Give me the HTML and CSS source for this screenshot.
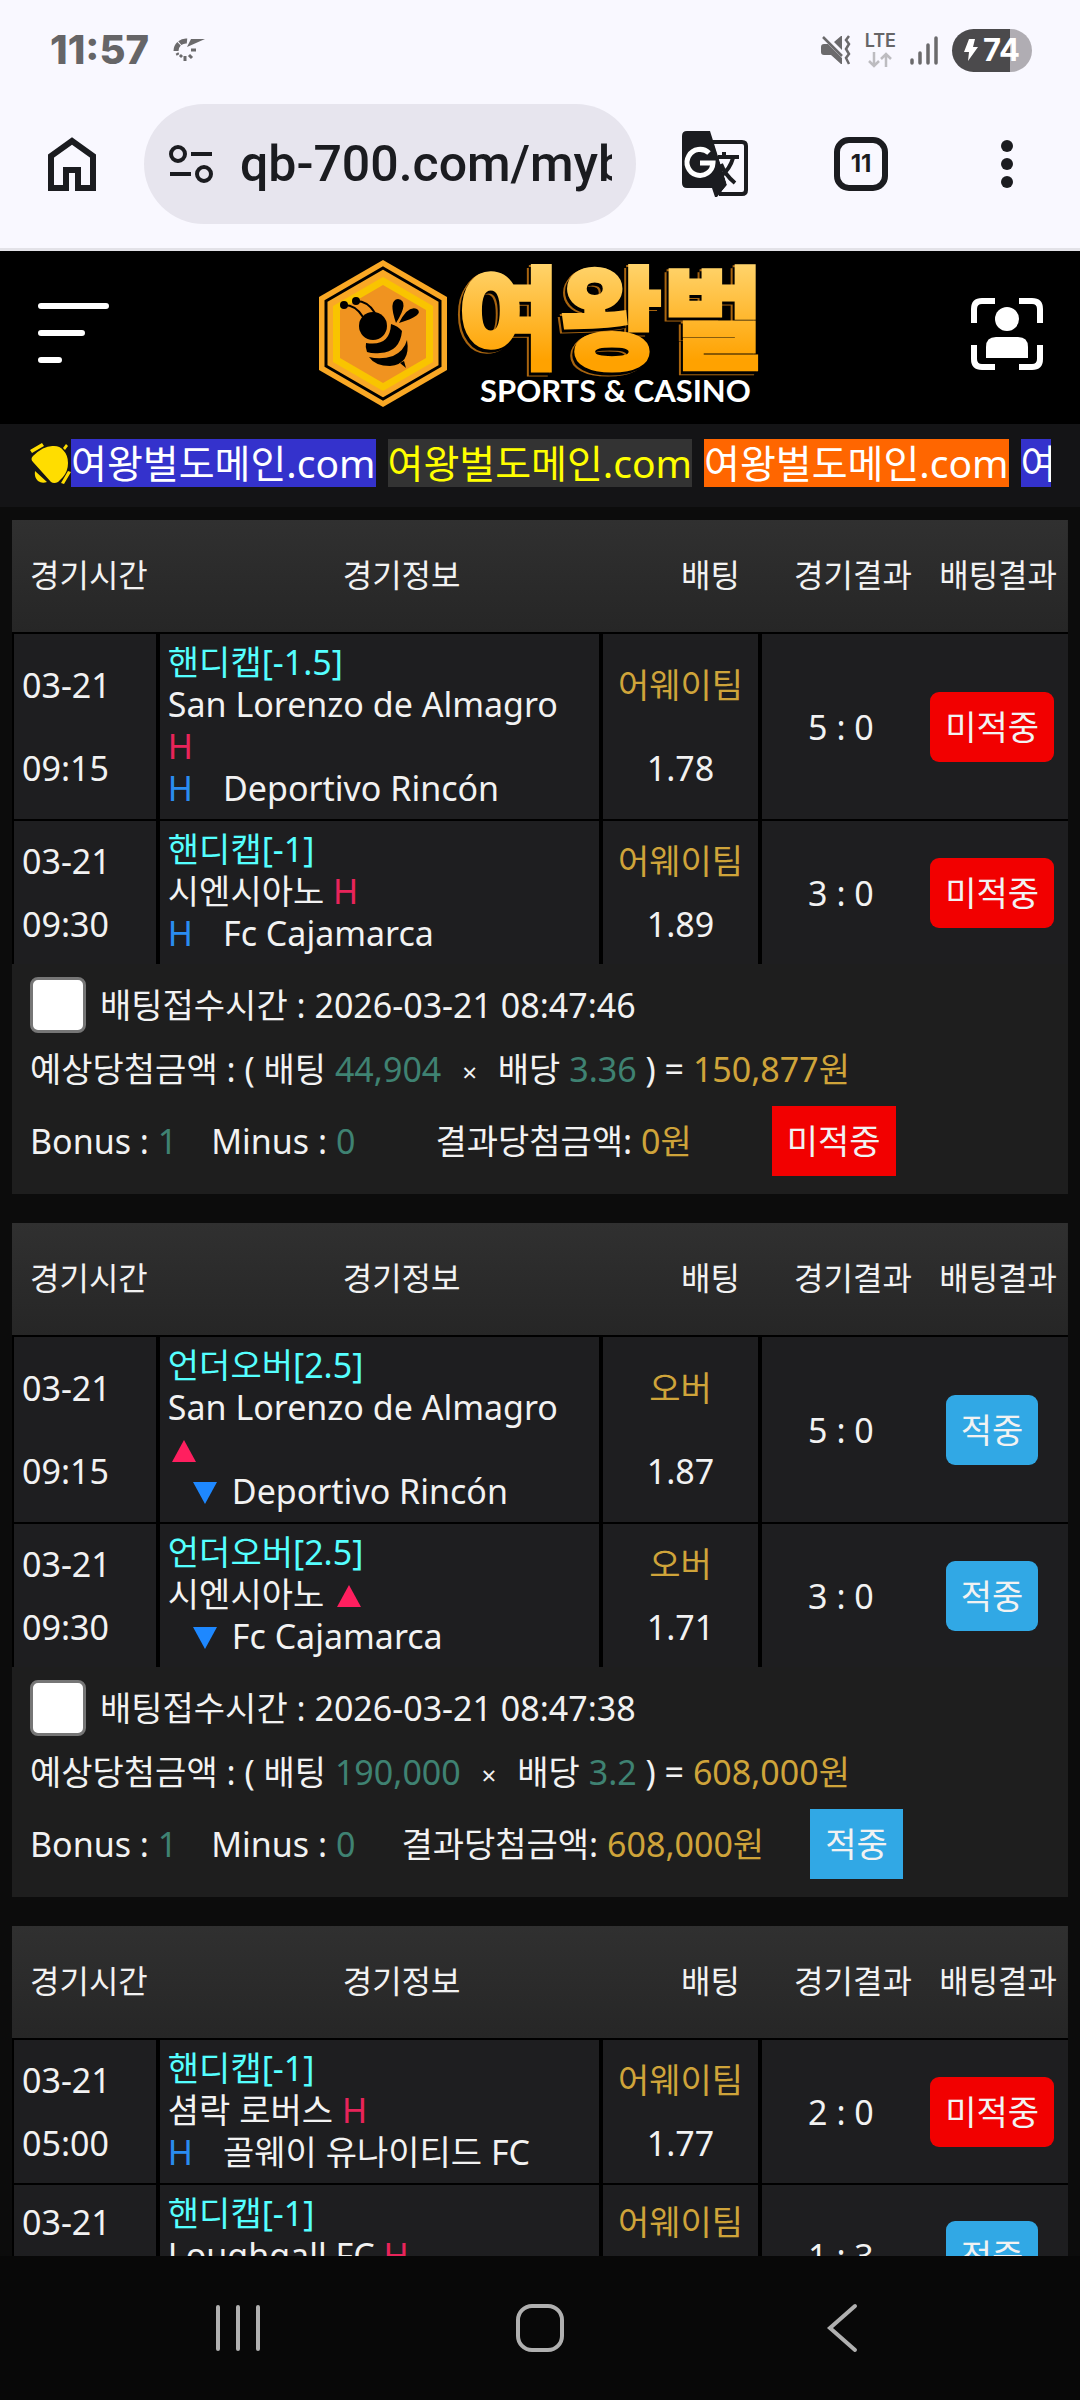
FILE: index.html
```html
<!DOCTYPE html>
<html lang="ko">
<head>
    <meta charset="UTF-8">
    <meta name="viewport" content="width=device-width, initial-scale=1.0">
    <title>여왕벌 - 배팅내역</title>
    <link rel="stylesheet" href="styles.css">
</head>
<body>
    <!-- 상태바 -->
    <div class="status-bar">
        <div class="status-left">
            <span class="clock">11:57</span>
            <svg width="32" height="24" viewBox="0 0 32 24" fill="none" stroke="#6b6a6c">
                <path d="M3 13a10 10 0 0 1 11-10" stroke-width="5" stroke-dasharray="8 1"/>
                <path d="M4 15l1 2M7 19l2-2M12 23v-5M19 20l-3-3M23 12h-5" stroke-width="3"/>
                <path d="M18 1h14L14 9z" fill="#6b6a6c" stroke="none"/>
            </svg>
        </div>
        <div class="status-right">
            <svg width="30" height="30" viewBox="0 0 30 30">
                <path d="M0 12q0-3 3-3h4l14 14v6h-1L10 20H3q-3 0-3-3zM13 7l7-6h1v14z" fill="#6b6a6c"/>
                <path d="M2 2l19 19" stroke="#6b6a6c" stroke-width="2.500"/>
                <path d="M28 1l-3 4 3 4-3 5 3 5-3 4 3 6" fill="none" stroke="#6b6a6c" stroke-width="2.500"/>
            </svg>
            <div class="lte">
                <span>LTE</span>
                <svg width="24" height="16" viewBox="0 0 24 16" fill="none" stroke="#bdbcc0" stroke-width="2.500"><path d="M6 0v14M1 9l5 5 5-5M18 15V2M13 7l5-5 5 5"/></svg>
            </div>
            <svg width="28" height="30" viewBox="0 0 28 30" stroke="#6b6a6c" stroke-width="3.500" stroke-linecap="round"><path d="M2 25v3M10 18v10M18 10v18M26 3v25"/></svg>
            <div class="battery">
                <svg width="14" height="22" viewBox="0 0 14 22"><path d="M5 0h6L9 8h5L4 22l1-9H0z" fill="#fff"/></svg>
                <span>74</span>
            </div>
        </div>
    </div>

    <!-- 브라우저 주소창 -->
    <div class="toolbar">
        <button class="tool home" aria-label="홈">
            <svg width="48" height="54" viewBox="0 0 48 54"><path d="M3 51V19L24 4l21 15v32H30V33H18v18z" fill="none" stroke="#1b1c20" stroke-width="6"/></svg>
        </button>
        <label class="address">
            <svg width="46" height="40" viewBox="0 0 46 40" fill="none" stroke="#1b1c20" stroke-width="4"><circle cx="10" cy="10" r="7"/><circle cx="36" cy="30" r="7"/><path d="M23 10h21M2 30h21"/></svg>
            <input type="text" value="qb-700.com/myb" aria-label="주소">
        </label>
        <button class="tool" aria-label="번역">
            <svg width="66" height="66" viewBox="0 0 66 66">
                <path d="M30 11h30q4 0 4 4v44q0 4-4 4H37" fill="none" stroke="#1b1c20" stroke-width="4"/>
                <path d="M5 0h23l17 54-10 12h-2l-3-9H5q-5 0-5-5V5q0-5 5-5z" fill="#1b1c20"/>
                <path d="M33 14h27v46H40l5-6z" fill="#f9f8ff"/>
                <path d="M27 22a13 13 0 1 0 4 10H18" fill="none" stroke="#fff" stroke-width="5"/>
                <path d="M36 26h21M42 21v5M51 27q-3 11-12 18M39 33q4 11 14 19" fill="none" stroke="#1b1c20" stroke-width="4"/>
            </svg>
        </button>
        <button class="tool" aria-label="탭"><span class="tab-count">11</span></button>
        <button class="tool" aria-label="메뉴">
            <svg width="12" height="48" viewBox="0 0 12 48" fill="#1b1c20"><circle cx="6" cy="6" r="6"/><circle cx="6" cy="24" r="6"/><circle cx="6" cy="42" r="6"/></svg>
        </button>
    </div>

    <main>
        <header class="header">
            <button class="icon-btn" aria-label="전체메뉴">
                <svg width="72" height="66" viewBox="0 0 72 66" stroke="#fff" stroke-width="6" stroke-linecap="round"><path d="M4 5h65M4 32h41M4 59h18"/></svg>
            </button>
            <a href="#" class="logo">
                <svg width="442" height="150" viewBox="0 0 442 150">
                    <defs>
                        <linearGradient id="gold" x1="0" y1="0" x2="0" y2="1">
                            <stop offset="0.15" stop-color="#ffd875"/>
                            <stop offset="0.8" stop-color="#ffa200"/>
                        </linearGradient>
                    </defs>
                    <path d="M64 1l64 37v73l-64 37L0 111V38z" fill="#f9a825"/>
                    <path d="M64 9l57 33v65l-57 33L7 107V42z" fill="none" stroke="#000" stroke-width="3"/>
                    <path d="M64 18l50 29v56l-50 29-50-29V47z" fill="#f9c400"/>
                    <path d="M64 26l43 25v48l-43 25-43-25V51z" fill="#f09320"/>
                    <g fill="#000">
                        <circle cx="54" cy="67" r="14"/>
                        <circle cx="25" cy="46" r="4"/>
                        <circle cx="37" cy="42" r="4"/>
                        <path d="M25 46q12 0 19 12M37 42q12 0 19 12" fill="none" stroke="#000" stroke-width="2"/>
                        <path d="M77 64q-8-23 2-24 12 2-2 24zM80 64q9-18 18-14 8 6-18 14z"/>
                        <path d="M72 65q7 2 11 7-2 21-22 22-7 1-13-1-2-5-1-9 24 4 25-19z"/>
                        <path d="M88 81q4 24-17 26-15 0-21-9 12 3 24-1 11-5 14-16z"/>
                        <path d="M81 104l4-2 2 7z"/>
                    </g>
                    <text class="logo-name" x="139" y="101" fill="url(#gold)" stroke="url(#gold)">여왕벌</text>
                    <text class="logo-sub" x="161" y="143" fill="#fff">SPORTS &amp; CASINO</text>
                </svg>
            </a>
            <button class="icon-btn" aria-label="내정보">
                <svg width="72" height="72" viewBox="0 0 72 72" fill="none" stroke="#fff" stroke-width="6">
                    <path d="M3 25V11q0-8 8-8h13M48 3h13q8 0 8 8v14M3 47v14q0 8 8 8h13M48 69h13q8 0 8-8V47"/>
                    <g fill="#fff" stroke="none"><circle cx="36" cy="21" r="12"/><path d="M15 60V49q0-10 10-10h22q10 0 10 10v11z"/></g>
                </svg>
            </button>
        </header>

        <div class="notice">
            <svg width="41" height="42" viewBox="0 0 41 42" fill="#fd0">
                <path d="M3 14Q14 3 24 4q6 0 9 4 5 5 5 13 0 8-5 14l-5 5q-4 2-7 0L3 20q-3-3 0-6z"/>
                <path d="M0 8L12 1l2 3L2 11zM33 6l3-4 2 2-3 4zM31 41l7-12 3 1-7 12zM5 29l12 11q-5 2-9-1-4-4-3-10z"/>
            </svg>
            <div class="notice-text">
                <span class="blue">여왕벌도메인.com</span>
                <span class="gray">여왕벌도메인.com</span>
                <span class="orange">여왕벌도메인.com</span>
                <span class="blue">여왕벌도메인.com</span>
            </div>
        </div>

        <section class="bet">
            <table>
                <thead>
                    <tr>
                        <th class="c-time">경기시간</th>
                        <th class="c-info">경기정보</th>
                        <th class="c-pick">배팅</th>
                        <th class="c-score">경기결과</th>
                        <th class="c-result">배팅결과</th>
                    </tr>
                </thead>
                <tbody>
                    <tr>
                        <td><div class="stack time"><span>03-21</span><span>09:15</span></div></td>
                        <td class="info">
                            <p class="type">핸디캡[-1.5]</p>
                            <p>San Lorenzo de Almagro <span class="h-red">H</span></p>
                            <p><span class="h-blue">H</span>Deportivo Rincón</p>
                        </td>
                        <td><div class="stack"><span class="gold">어웨이팀</span><span>1.78</span></div></td>
                        <td class="score">5 : 0</td>
                        <td class="result"><span class="badge lose">미적중</span></td>
                    </tr>
                    <tr>
                        <td><div class="stack time"><span>03-21</span><span>09:30</span></div></td>
                        <td class="info">
                            <p class="type">핸디캡[-1]</p>
                            <p>시엔시아노 <span class="h-red">H</span></p>
                            <p><span class="h-blue">H</span>Fc Cajamarca</p>
                        </td>
                        <td><div class="stack"><span class="gold">어웨이팀</span><span>1.89</span></div></td>
                        <td class="score">3 : 0</td>
                        <td class="result"><span class="badge lose">미적중</span></td>
                    </tr>
                </tbody>
            </table>
            <div class="summary">
                <div class="line check">
                    <input type="checkbox" id="bet1">
                    <label for="bet1">배팅접수시간 : 2026-03-21 08:47:46</label>
                </div>
                <div class="line expect">
                    <p>예상당첨금액 : ( 배팅 <span class="teal">44,904</span> <span class="times">×</span> 배당 <span class="teal">3.36</span> ) = <span class="gold">150,877원</span></p>
                </div>
                <div class="line total">
                    <p class="bonus"><span>Bonus : <span class="teal">1</span></span><span>Minus : <span class="teal">0</span></span></p>
                    <p>결과당첨금액: <span class="gold">0원</span></p>
                    <span class="badge square lose">미적중</span>
                </div>
            </div>
        </section>

        <section class="bet">
            <table>
                <thead>
                    <tr>
                        <th class="c-time">경기시간</th>
                        <th class="c-info">경기정보</th>
                        <th class="c-pick">배팅</th>
                        <th class="c-score">경기결과</th>
                        <th class="c-result">배팅결과</th>
                    </tr>
                </thead>
                <tbody>
                    <tr>
                        <td><div class="stack time"><span>03-21</span><span>09:15</span></div></td>
                        <td class="info">
                            <p class="type">언더오버[2.5]</p>
                            <p>San Lorenzo de Almagro <svg class="up" width="32" height="22" viewBox="0 0 32 22"><path d="M16 0l12 22H4z" fill="#ff1f5f"/></svg></p>
                            <p><svg class="down" width="24" height="22" viewBox="0 0 24 22"><path d="M0 0h24L12 22z" fill="#1e88ff"/></svg>Deportivo Rincón</p>
                        </td>
                        <td><div class="stack"><span class="gold">오버</span><span>1.87</span></div></td>
                        <td class="score">5 : 0</td>
                        <td class="result"><span class="badge win">적중</span></td>
                    </tr>
                    <tr>
                        <td><div class="stack time"><span>03-21</span><span>09:30</span></div></td>
                        <td class="info">
                            <p class="type">언더오버[2.5]</p>
                            <p>시엔시아노 <svg class="up" width="32" height="22" viewBox="0 0 32 22"><path d="M16 0l12 22H4z" fill="#ff1f5f"/></svg></p>
                            <p><svg class="down" width="24" height="22" viewBox="0 0 24 22"><path d="M0 0h24L12 22z" fill="#1e88ff"/></svg>Fc Cajamarca</p>
                        </td>
                        <td><div class="stack"><span class="gold">오버</span><span>1.71</span></div></td>
                        <td class="score">3 : 0</td>
                        <td class="result"><span class="badge win">적중</span></td>
                    </tr>
                </tbody>
            </table>
            <div class="summary">
                <div class="line check">
                    <input type="checkbox" id="bet2">
                    <label for="bet2">배팅접수시간 : 2026-03-21 08:47:38</label>
                </div>
                <div class="line expect">
                    <p>예상당첨금액 : ( 배팅 <span class="teal">190,000</span> <span class="times">×</span> 배당 <span class="teal">3.2</span> ) = <span class="gold">608,000원</span></p>
                </div>
                <div class="line total paid">
                    <p class="bonus"><span>Bonus : <span class="teal">1</span></span><span>Minus : <span class="teal">0</span></span></p>
                    <p>결과당첨금액: <span class="gold">608,000원</span></p>
                    <span class="badge square win">적중</span>
                </div>
            </div>
        </section>

        <section class="bet">
            <table>
                <thead>
                    <tr>
                        <th class="c-time">경기시간</th>
                        <th class="c-info">경기정보</th>
                        <th class="c-pick">배팅</th>
                        <th class="c-score">경기결과</th>
                        <th class="c-result">배팅결과</th>
                    </tr>
                </thead>
                <tbody>
                    <tr>
                        <td><div class="stack time"><span>03-21</span><span>05:00</span></div></td>
                        <td class="info">
                            <p class="type">핸디캡[-1]</p>
                            <p>셤락 로버스 <span class="h-red">H</span></p>
                            <p><span class="h-blue">H</span>골웨이 유나이티드 FC</p>
                        </td>
                        <td><div class="stack"><span class="gold">어웨이팀</span><span>1.77</span></div></td>
                        <td class="score">2 : 0</td>
                        <td class="result"><span class="badge lose">미적중</span></td>
                    </tr>
                    <tr class="next">
                        <td><div class="stack time"><span>03-21</span></div></td>
                        <td class="info">
                            <p class="type">핸디캡[-1]</p>
                            <p>Loughgall FC <span class="h-red">H</span></p>
                        </td>
                        <td><div class="stack"><span class="gold">어웨이팀</span></div></td>
                        <td class="score">1 : 3</td>
                        <td class="result"><span class="badge win">적중</span></td>
                    </tr>
                </tbody>
            </table>
        </section>
    </main>

    <!-- 하단 네비게이션 -->
    <nav class="nav-bar">
        <button aria-label="최근 앱"><svg width="46" height="48" viewBox="0 0 46 48" stroke="#b0b0b0" stroke-width="4" stroke-linecap="round"><path d="M3 3v42M23 3v42M43 3v42"/></svg></button>
        <button aria-label="홈 화면"><svg width="50" height="50" viewBox="0 0 50 50"><rect x="3" y="3" width="44" height="44" rx="14" fill="none" stroke="#b0b0b0" stroke-width="4"/></svg></button>
        <button aria-label="뒤로"><svg width="32" height="50" viewBox="0 0 32 50"><path d="M29 3L4 25l25 22" fill="none" stroke="#b0b0b0" stroke-width="4" stroke-linecap="round"/></svg></button>
    </nav>
</body>
</html>
```
FILE: styles.css
```css
* {
    box-sizing: border-box;
}

body {
    margin: 0;
    height: 100vh;
    display: flex;
    flex-direction: column;
    background-color: #0c0c0c;
    color: #f2f2f2;
    font-family: "Noto Sans", "Noto Sans CJK KR", sans-serif;
    font-weight: 400;
    font-size: 34px;
    line-height: 42px;
}

p {
    margin: 0;
}

button {
    display: flex;
    justify-content: center;
    align-items: center;
    padding: 0;
    border: 0;
    background: none;
}

svg {
    flex: none;
}

/* 상태바 */
.status-bar {
    flex: none;
    height: 100px;
    padding: 0 48px 0 50px;
    display: flex;
    justify-content: space-between;
    align-items: center;
    background-color: #f9f8ff;
    color: #666567;
    font-family: Inter, sans-serif;
}

.status-left, .status-right {
    display: flex;
    align-items: center;
    gap: 24px;
}

.status-right {
    gap: 14px;
}

.clock {
    font-size: 40px;
    font-weight: 800;
}

.lte {
    display: flex;
    flex-direction: column;
    align-items: center;
    gap: 2px;
    font-size: 18px;
    font-weight: 600;
    line-height: 18px;
}

.battery {
    width: 80px;
    height: 43px;
    border-radius: 22px;
    display: flex;
    justify-content: center;
    align-items: center;
    gap: 5px;
    background: linear-gradient(90deg, #4b4a4c 73%, #b0adb3 73%);
    color: #fff;
    font-size: 31px;
    font-weight: 700;
}

/* 주소창 */
.toolbar {
    flex: none;
    height: 151px;
    padding-bottom: 20px;
    display: flex;
    align-items: center;
    background-color: #f9f8ff;
    border-bottom: 3px solid #e3e2e8;
}

.tool {
    width: 146px;
    height: 120px;
}

.home {
    width: 144px;
}

.address {
    flex: 1;
    min-width: 0;
    height: 120px;
    margin-right: 6px;
    padding: 0 24px;
    display: flex;
    align-items: center;
    gap: 26px;
    border-radius: 60px;
    background-color: #e7e5ee;
}

.address input {
    flex: 1;
    min-width: 0;
    padding: 0;
    border: 0;
    background: none;
    color: #1b1c20;
    font-family: Roboto, sans-serif;
    font-size: 50px;
    font-weight: 500;
}

.tab-count {
    width: 54px;
    height: 54px;
    border: 6px solid #1b1c20;
    border-radius: 15px;
    color: #1b1c20;
    font-family: Inter, sans-serif;
    font-size: 24px;
    font-weight: 700;
    line-height: 42px;
}

/* 사이트 */
main {
    flex: 1;
    min-height: 0;
    overflow: hidden;
}

.header {
    height: 173px;
    padding: 0 37px 8px;
    display: flex;
    justify-content: space-between;
    align-items: center;
    background-color: #000;
}

.logo {
    display: flex;
}

.logo-name {
    font-family: "Noto Sans CJK KR", sans-serif;
    font-size: 111px;
    font-weight: 900;
    stroke-width: 3px;
    filter: drop-shadow(-2px 3px 0 #000) drop-shadow(-2px 1px 0 #a8640f);
}

.logo-sub {
    font-family: Lato, sans-serif;
    font-size: 31px;
    font-weight: 700;
}

.notice {
    height: 83px;
    margin-bottom: 13px;
    padding: 0 29px 6px 30px;
    display: flex;
    align-items: center;
    background-color: #141416;
}

.notice-text {
    flex: 1;
    display: flex;
    gap: 12px;
    overflow: hidden;
    font-size: 39px;
    line-height: 48px;
    white-space: nowrap;
}

.blue {
    background-color: #3432cc;
    color: #fff;
}

.gray {
    background-color: #333;
    color: #ff0;
}

.orange {
    background-color: #f60;
    color: #fff;
}

/* 배팅내역 */
.bet {
    margin: 0 12px 29px;
    background-color: #1e1e1e;
}

table {
    width: 100%;
    table-layout: fixed;
    border-collapse: separate;
    border-spacing: 0;
    text-align: center;
}

thead {
    background: linear-gradient(#303030, #262626);
}

th {
    height: 112px;
    padding: 0 0 2px;
    font-size: 32px;
    font-weight: 400;
    white-space: nowrap;
}

.c-time {
    width: 14%;
    padding-left: 18px;
    text-align: left;
}

.c-info {
    width: 42%;
    padding-left: 40px;
}

.c-pick {
    width: 15%;
    padding-left: 56px;
}

.c-score {
    width: 15%;
    padding-left: 24px;
}

.c-result {
    width: 14%;
    padding-left: 8px;
}

td {
    height: 1px;
    padding: 0;
    border-top: 2px solid #000;
    border-right: 4px solid #000;
    background-color: #1e1e20;
}

td:first-child {
    border-left: 2px solid #000;
}

.score, .result {
    border-right: 0;
}

.result {
    padding-right: 4px;
}

.stack {
    height: 100%;
    padding: 9px 0;
    display: flex;
    flex-direction: column;
    justify-content: space-around;
}

.time {
    padding-left: 8px;
    text-align: left;
}

.info {
    padding: 7px 20px 10px 8px;
    text-align: left;
}

.type {
    color: #5ff;
}

.h-red {
    color: #e8245a;
}

.h-blue {
    margin-right: 30px;
    color: #2a8cf0;
}

.down {
    margin: 0 15px 0 25px;
}

.gold {
    color: #cfa43a;
}

.teal {
    color: #3f8272;
}

.badge {
    display: inline-block;
    padding: 0 15px;
    border-radius: 9px;
    line-height: 70px;
}

.square {
    border-radius: 0;
}

.lose {
    background-color: #f20000;
}

.win {
    background-color: #31a8e5;
}

/* 화면 아래에서 잘리는 경기 */
.next td {
    height: 144px;
}

.next .info {
    vertical-align: top;
}

.next .stack {
    justify-content: flex-start;
    padding-top: 16px;
}

.summary {
    padding: 11px 18px 18px;
}

.line {
    display: flex;
    align-items: center;
    white-space: nowrap;
}

.check {
    height: 60px;
    gap: 14px;
}

.check input {
    appearance: none;
    width: 56px;
    height: 56px;
    margin: 0;
    border: 3px solid #767676;
    border-radius: 8px;
    background-color: #fff;
}

.expect {
    height: 71px;
}

.times {
    margin: 0 12px;
    font-size: 26px;
}

.total {
    height: 70px;
    gap: 80px;
}

.paid {
    gap: 46px;
}

.bonus {
    display: flex;
    gap: 34px;
}

/* 하단 네비게이션 */
.nav-bar {
    flex: none;
    height: 144px;
    display: flex;
    justify-content: center;
    background-color: #080808;
}

.nav-bar button {
    width: 28%;
}
```
